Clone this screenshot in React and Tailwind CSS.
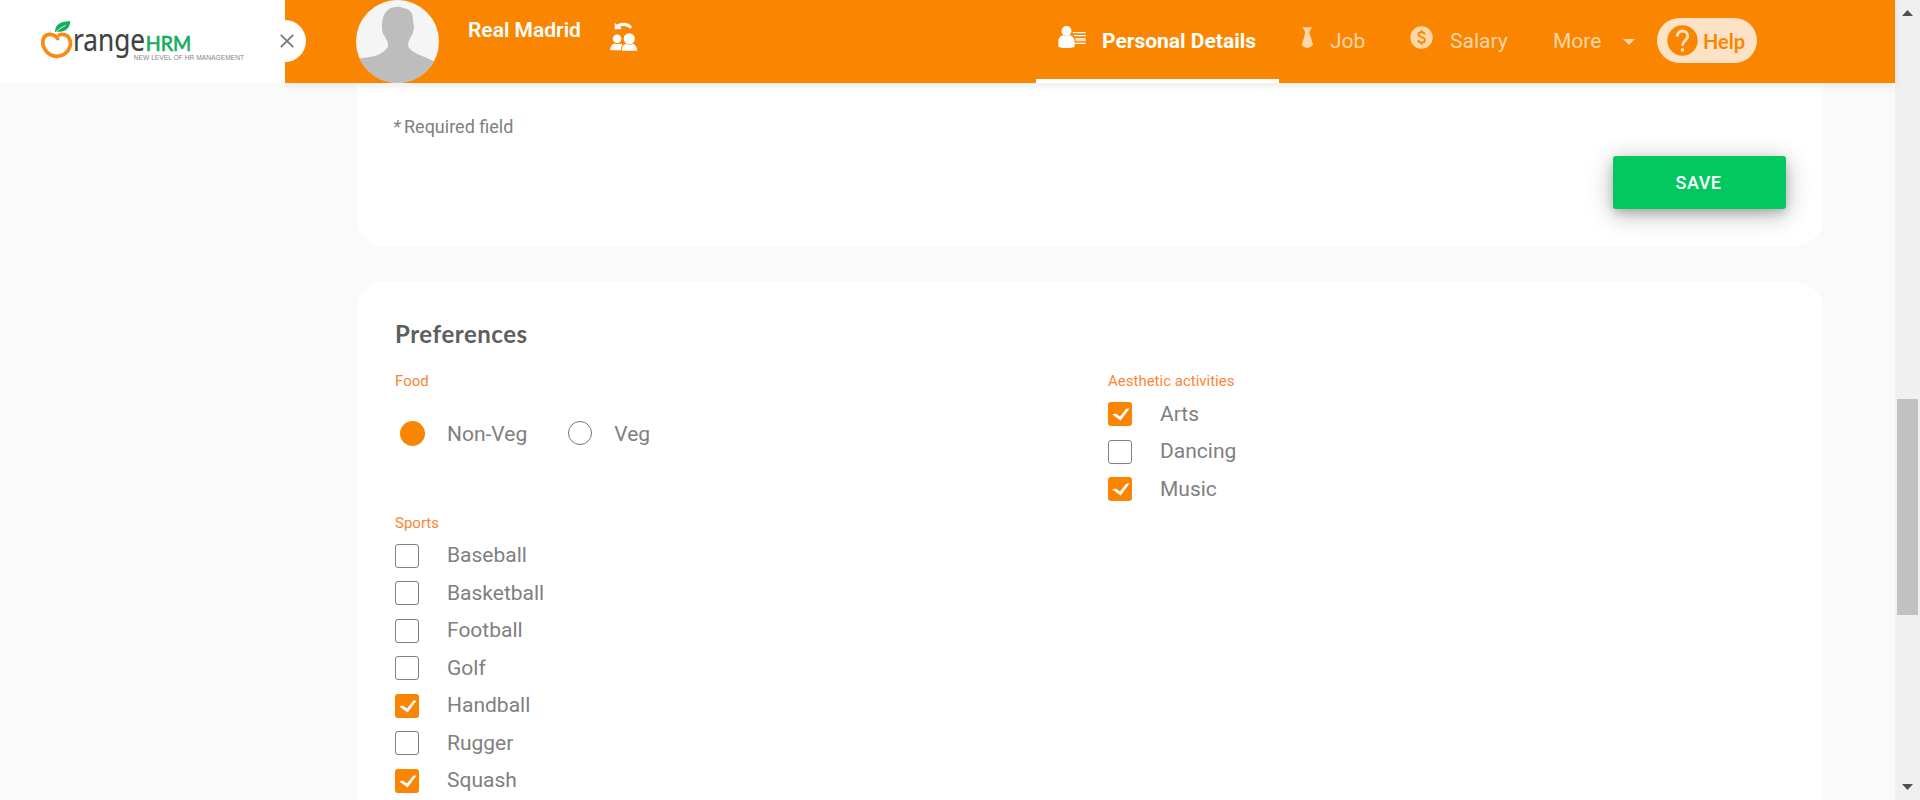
import React from "react";

function Logo() {
  return (
    <svg className="h-[83px] w-[285px] shrink-0" viewBox="0 0 285 83">
      <g transform="scale(0.33333)">
        <path
          d="M173 116 C165 102 142 98 132 112 C120 136 140 168 171 169 C202 168 220 136 207 114 C202 105 189 101 178 104"
          fill="none"
          stroke="#fb8a12"
          strokeWidth="11"
          strokeLinecap="round"
        />
        <path d="M165 96 C165 76 181 62 211 64 C210 84 196 98 173 95 Z" fill="#14ae5c" />
        <path d="M163 101 C171 92 181 84 197 76" stroke="#fff" strokeWidth="2.5" fill="none" />
      </g>
      <text x="73" y="50.8" fontFamily="Noto Sans, sans-serif" fontSize="30" textLength="72" lengthAdjust="spacingAndGlyphs" fill="#414141" stroke="#414141" strokeWidth="0.2">range</text>
      <text x="145.8" y="50.5" fontFamily="Lato, sans-serif" fontSize="20.5" textLength="45.500" lengthAdjust="spacingAndGlyphs" fill="#14ae5c" stroke="#14ae5c" strokeWidth="0.7">HRM</text>
      <text x="133.7" y="60.4" fontFamily="Liberation Sans, sans-serif" fontSize="7.8" textLength="110.5" lengthAdjust="spacingAndGlyphs" fill="#858585">NEW LEVEL OF HR MANAGEMENT</text>
    </svg>
  );
}

function Avatar() {
  return (
    <svg className="h-[83px] w-[83px] shrink-0" viewBox="48 0 249 249">
      <defs>
        <clipPath id="avatar-clip">
          <circle cx="172.5" cy="124.5" r="124.5" />
        </clipPath>
      </defs>
      <g clipPath="url(#avatar-clip)">
        <rect x="48" width="249" height="249" fill="#f5f5f5" />
        <path
          d="M48 182 C62 171 84 174 104 168 C124 161 138 151 144 140 C146 127 138 117 132 106 C127 98 126 90 126 74 C127 40 143 21 172 20 C179 19 184 23 188 24 C207 25 218 37 219 56 C218 64 222 73 222 82 C220 92 221 97 216 106 C208 116 203 128 205 140 C212 151 226 160 246 168 C264 175 274 178 297 195 V249 H48 Z"
          fill="#bdbdbd"
        />
      </g>
    </svg>
  );
}

function SwitchUserIcon() {
  return (
    <svg className="h-[29px] w-[28px] shrink-0" viewBox="810 66 84 88" fill="#fff">
      <path d="M824 68 L831 74 C845 65 868 67 876 81 C875 86 869 87 865 83 C858 77 848 77 840 80 L845 87 L824 88 Z" />
      <circle cx="831" cy="117" r="13" />
      <path d="M810 152 C811 138 816 133 823 131 Q831 136 839 131 Q844 132 847 135 Q842 142 842 152 Z" />
      <circle cx="868" cy="117" r="17" />
      <path d="M845 153 C846 140 850 135 857 132 Q868 139 880 132 C888 136 892 143 892 153 Z" />
    </svg>
  );
}

function PersonalIcon() {
  return (
    <svg className="mb-[7px] h-[22px] w-[29px] shrink-0" viewBox="113 81 87 66" fill="#fff">
      <circle cx="138.500" cy="96" r="15" />
      <path d="M114 143 V128 C115 115 122 110 129 109 Q138 114 147 109 C156 110 163 117 163 129 V143 C155 148 122 148 114 143 Z" />
      <path d="M157 99 H196 V103 H158 Z M159 108 H197 V112 H163 Z M164 118 H196 V122 H166 Z M166 124 H197 V127 H166 Z M165 131 H196 V135 H165 Z" />
    </svg>
  );
}

function TieIcon() {
  return (
    <svg className="mb-[7px] h-[21px] w-[13px] shrink-0" viewBox="843 82 38 63" fill="#fed6a8">
      <path d="M847 83 H876 L867 97 Q873 117 879 135 Q871 144 861 145 Q851 144 844 135 Q852 117 855 97 Z" />
    </svg>
  );
}

function DollarIcon() {
  return (
    <svg className="mb-[7px] h-[23px] w-[23px] shrink-0" viewBox="0 0 23 23">
      <circle cx="11.500" cy="11.500" r="11.200" fill="#fed6a8" />
      <path d="M14.700 8.500 C14.300 6.700 13 6.200 11.600 6.200 C9.800 6.200 8.500 7.200 8.500 8.600 C8.500 12.100 14.900 10.300 14.900 14 C14.900 15.700 13.500 16.700 11.700 16.700 C9.800 16.700 8.400 15.700 8.100 14 M11.600 4.200 V6.500 M11.600 16.500 V18.700" fill="none" stroke="#fa8500" strokeWidth="1.8" />
    </svg>
  );
}

function Header() {
  return (
    <header className="relative z-10 flex h-[83px] shrink-0">
      <div className="relative z-10 flex w-[285px] shrink-0 bg-white">
        <Logo />
        <div className="absolute top-5 left-[264px] flex h-[42px] w-[42px] items-center justify-center rounded-full bg-white pl-[3px]">
          <svg className="h-[14px] w-[14px]" viewBox="0 0 14 14" stroke="#787878" strokeWidth="1.8">
            <path d="M0.800 0.800 L13.200 13.200 M13.200 0.800 L0.800 13.200" />
          </svg>
        </div>
      </div>
      <div className="flex flex-1 bg-[#fa8500] pl-[71px] shadow-[0_3px_8px_rgba(0,0,0,0.08)]">
        <Avatar />
        <div className="ml-[28px] flex w-[143px] pt-[15px] pl-px text-[21px] leading-[30px] font-semibold whitespace-nowrap text-white">
          Real Madrid
        </div>
        <div className="flex w-[426px] pt-[22px]">
          <SwitchUserIcon />
        </div>
        <nav className="flex text-[21px] leading-[30px] whitespace-nowrap text-[#fed6a8]">
          <div className="flex w-[243px] items-center border-b-4 border-white pt-[2px] pl-[22px] font-bold text-white">
            <PersonalIcon />
            <span className="ml-[15px]">Personal Details</span>
          </div>
          <div className="flex w-[131px] items-center pb-[2px] pl-[22px]">
            <TieIcon />
            <span className="ml-[16px]">Job</span>
          </div>
          <div className="flex w-[142px] items-center pb-[2px]">
            <DollarIcon />
            <span className="ml-[17px]">Salary</span>
          </div>
          <div className="flex w-[105px] items-center pb-[2px] pl-px">
            <span className="w-[70px]">More</span>
            <svg className="mt-[2px] h-[6px] w-[12px]" viewBox="0 0 12 6" fill="#fed6a8">
              <path d="M0 0 H12 L6 6 Z" />
            </svg>
          </div>
        </nav>
        <div className="mt-[18px] flex h-[45px] w-[100px] items-center rounded-full bg-[#fee2c5] pl-[10px]">
          <svg className="h-[31px] w-[31px] shrink-0" viewBox="0 0 31 31">
            <circle cx="15.500" cy="15.500" r="15.200" fill="#fa8500" />
            <path d="M10.300 11.500 C10.300 4.200 20.700 4.200 20.700 11.200 C20.700 15.200 15.500 15.500 15.500 20.800" fill="none" stroke="#fee2c5" strokeWidth="2.900" />
            <rect x="14" y="23.500" width="3" height="3" fill="#fee2c5" />
          </svg>
          <span className="ml-[5px] font-[Lato,sans-serif] text-[20px] leading-[30px] font-bold text-[#fa8500]">
            Help
          </span>
        </div>
      </div>
    </header>
  );
}

function CheckRow({ label, checked }) {
  return (
    <label className="flex h-[37.500px] items-center">
      {checked ? (
        <span className="flex h-6 w-6 shrink-0 items-center justify-center rounded-[3px] bg-[#fa8500]">
          <svg className="h-6 w-6" viewBox="0 0 24 24" fill="#fff">
            <path d="M4.300 12.600 L7.700 11.400 L12 14.600 L18.200 6.800 L21.500 6.600 L12.600 18.500 Z" />
          </svg>
        </span>
      ) : (
        <span className="h-6 w-6 shrink-0 rounded-[3px] border border-[#808080] bg-white" />
      )}
      <span className="ml-[28px] pb-px text-[21px] leading-[30px]">{label}</span>
    </label>
  );
}

function Radio({ label, checked }) {
  return (
    <label className="flex items-center">
      {checked ? (
        <span className="h-[25px] w-[25px] rounded-full bg-[#fa8500]" />
      ) : (
        <span className="h-6 w-6 rounded-full border border-[#777]" />
      )}
      <span className="ml-[22px] pt-px text-[21px] leading-[30px]">{label}</span>
    </label>
  );
}

const SPORTS = [
  ["Baseball", false],
  ["Basketball", false],
  ["Football", false],
  ["Golf", false],
  ["Handball", true],
  ["Rugger", false],
  ["Squash", true],
];

const ACTIVITIES = [
  ["Arts", true],
  ["Dancing", false],
  ["Music", true],
];

function Caption({ children }) {
  return <div className="h-5 text-[15px] leading-5 text-[#fb8533]">{children}</div>;
}

export default function App() {
  return (
    <div className="flex h-[800px] w-[1920px] overflow-hidden bg-[#fafafa] font-[Roboto,sans-serif] text-[#808080]">
      <div className="flex w-[1895px] flex-col">
        <Header />
        <main className="flex flex-1 flex-col gap-[36px] pl-[357px]">
          <section className="flex h-[163px] w-[1466px] shrink-0 flex-col rounded-b-[28px] bg-white px-[37px] pt-[32px]">
            <p className="flex text-[18px] leading-6">
              <span className="-ml-px w-[11px] italic">*</span>
              <span>Required field</span>
            </p>
            <button className="mt-[17px] h-[53px] w-[173px] self-end rounded-[3px] bg-[#03c75f] pr-[2px] pb-px text-[18px] font-medium tracking-[0.500px] text-white shadow-[0_4px_8px_rgba(0,0,0,0.15),0_5px_24px_rgba(0,0,0,0.3)]">
              SAVE
            </button>
          </section>
          <section className="h-[600px] w-[1466px] shrink-0 rounded-t-[28px] bg-white pt-[36px] pl-[38px]">
            <h2 className="font-[Lato,sans-serif] text-[24px] leading-[32px] font-bold tracking-[0.550px] text-[#5e5e5e]">
              Preferences
            </h2>
            <div className="mt-[21px] flex">
              <div className="w-[713px]">
                <Caption>Food</Caption>
                <div className="mt-[27px] flex h-[30px] items-center gap-[41px] pl-[5px]">
                  <Radio label="Non-Veg" checked />
                  <Radio label="Veg" />
                </div>
                <div className="mt-[65px]">
                  <Caption>Sports</Caption>
                </div>
                <div className="mt-[4px]">
                  {SPORTS.map(([label, checked]) => (
                    <CheckRow key={label} label={label} checked={checked} />
                  ))}
                </div>
              </div>
              <div>
                <Caption>Aesthetic activities</Caption>
                <div className="mt-[4.700px]">
                  {ACTIVITIES.map(([label, checked]) => (
                    <CheckRow key={label} label={label} checked={checked} />
                  ))}
                </div>
              </div>
            </div>
          </section>
        </main>
      </div>
      <div className="flex w-[25px] flex-col items-center bg-[#f0f0f0] pt-[10px] pb-[10px]">
        <svg className="h-[6px] w-[11px]" viewBox="0 0 11 6" fill="#505050">
          <path d="M5.500 0 L11 6 H0 Z" />
        </svg>
        <div className="mt-[383px] h-[216px] w-[21px] bg-[#c1c1c1]" />
        <svg className="mt-auto h-[6px] w-[11px]" viewBox="0 0 11 6" fill="#505050">
          <path d="M0 0 H11 L5.500 6 Z" />
        </svg>
      </div>
    </div>
  );
}
